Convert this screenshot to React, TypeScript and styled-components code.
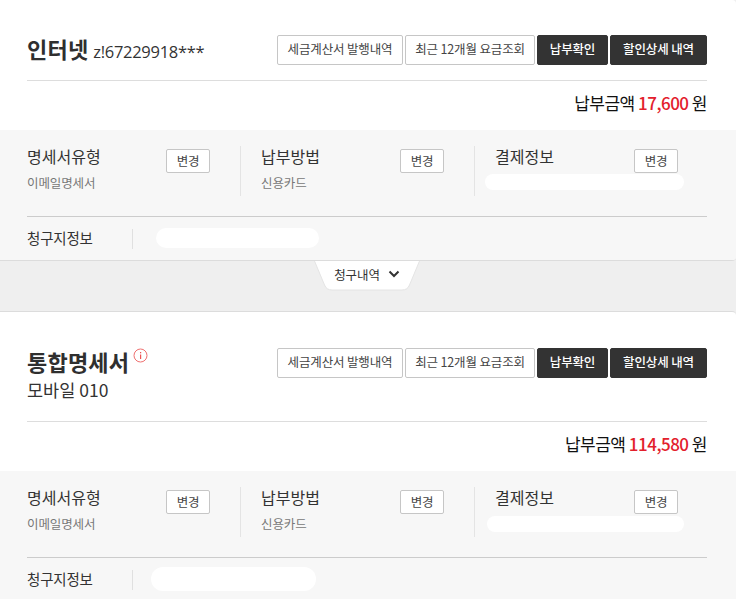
import * as React from 'react'
import styled, { createGlobalStyle } from 'styled-components'

const GlobalStyle = createGlobalStyle`
  html, body {
    margin: 0;
    padding: 0;
    background: #efefef;
    overflow: hidden;
  }
  body {
    font-family: "Noto Sans CJK KR", "Noto Sans", sans-serif;
    color: #333;
  }
`

const Page = styled.div`
  width: 736px;
  height: 599px;
  overflow: hidden;
  background: #efefef;
`

const Card = styled.section<{ $first?: boolean }>`
  background: #fff;
  border-top: ${p => (p.$first ? '0' : '1px solid #dcdcdc')};
  border-bottom: ${p => (p.$first ? '1px solid #dcdcdc' : '0')};
  border-top-right-radius: 4px;
  border-bottom-right-radius: ${p => (p.$first ? '4px' : '0')};
  overflow: hidden;
`

const Header = styled.div<{ $height: number; $top: number }>`
  height: ${p => p.$height}px;
  margin: 0 29px 0 27px;
  padding-top: ${p => p.$top}px;
  box-sizing: border-box;
  border-bottom: 1px solid #ddd;
  display: flex;
  justify-content: space-between;
  align-items: flex-start;
`

const TitleRow = styled.div`
  display: flex;
  align-items: baseline;
  gap: 5px;
  line-height: 26px;
`

const TitleStack = styled.div`
  display: flex;
  flex-direction: column;
`

const TitleLine = styled.div`
  display: flex;
  align-items: flex-start;
  gap: 4px;
  height: 30px;
  line-height: 26px;
`

const Title = styled.h2`
  margin: 0;
  font-size: 22px;
  line-height: inherit;
  font-weight: 700;
  letter-spacing: 0.2px;
  color: #2f2f2f;
`

const Account = styled.span`
  font-family: "Open Sans", "Noto Sans CJK KR", sans-serif;
  font-size: 16.5px;
  letter-spacing: -0.3px;
  color: #333;
`

const Phone = styled.span`
  font-size: 17.5px;
  line-height: 24px;
  color: #333;
`

const InfoIcon = styled.svg`
  width: 15px;
  height: 15px;
`

const Buttons = styled.div`
  display: flex;
  gap: 2px;
`

const ActionButton = styled.button<{ $dark?: boolean; $width: number }>`
  width: ${p => p.$width}px;
  height: 30px;
  padding: 0 0 3px;
  border-radius: 2px;
  border: 1px solid ${p => (p.$dark ? '#333' : '#c6c6c6')};
  background: ${p => (p.$dark ? '#333' : '#fff')};
  color: ${p => (p.$dark ? '#fff' : '#444')};
  font-family: inherit;
  font-size: 12.5px;
  font-weight: ${p => (p.$dark ? 500 : 400)};
  letter-spacing: -0.15px;
  white-space: nowrap;
`

const Amount = styled.div`
  height: 49px;
  margin-right: 29px;
  padding-top: 10px;
  box-sizing: border-box;
  text-align: right;
  font-size: 17px;
  line-height: 24px;
  letter-spacing: -0.5px;
  color: #111;
`

const Price = styled.strong`
  font-weight: 500;
  color: #e3202c;
`

const Detail = styled.div`
  background: #f7f7f7;
  padding: 16px 29px 0 27px;
`

const Columns = styled.div`
  display: flex;
  height: 50px;
  padding-bottom: 20px;
  border-bottom: 1px solid #ccc;
`

const Column = styled.div<{ $first?: boolean; $last?: boolean }>`
  width: ${p => (p.$first ? 214 : p.$last ? 212 : 234)}px;
  padding-left: ${p => (p.$first ? 0 : 20)}px;
  border-right: ${p => (p.$last ? 0 : '1px solid #e4e4e4')};
  box-sizing: border-box;
  display: flex;
  align-items: flex-start;
  flex-shrink: 0;
`

const ColumnText = styled.div`
  width: 139px;
  flex-shrink: 0;
`

const Label = styled.div`
  font-size: 16px;
  line-height: 20px;
  letter-spacing: 0;
  color: #333;
`

const SubText = styled.div`
  margin-top: 8px;
  font-size: 12.5px;
  line-height: 18px;
  letter-spacing: -0.1px;
  color: #777;
`

const ChangeButton = styled.button`
  width: 44px;
  height: 24px;
  margin-top: 3px;
  padding: 0 0 2px;
  border: 1px solid #c6c6c6;
  border-radius: 2px;
  background: #fff;
  color: #444;
  font-family: inherit;
  font-size: 12.5px;
  letter-spacing: -0.2px;
`

const Masked = styled.span<{ $w: number; $h: number; $x: number; $y: number }>`
  display: block;
  width: ${p => p.$w}px;
  height: ${p => p.$h}px;
  margin-left: ${p => p.$x}px;
  margin-top: ${p => p.$y}px;
  border-radius: ${p => p.$h / 2}px;
  background: #fff;
`

const BillingRow = styled.div`
  height: 43px;
  padding-top: 12px;
  box-sizing: border-box;
  display: flex;
  align-items: flex-start;
`

const BillingLabel = styled.div`
  width: 105px;
  height: 20px;
  border-right: 1px solid #e0e0e0;
  flex-shrink: 0;
  font-size: 14.5px;
  line-height: 17px;
  letter-spacing: -0.2px;
  color: #333;
`

const Strip = styled.div`
  height: 50px;
  display: flex;
  justify-content: center;
  background: #efefef;
`

const Tab = styled.button`
  position: relative;
  width: 106px;
  height: 30px;
  margin-left: -2px;
  padding: 0 0 4px;
  border: 0;
  background: none;
  display: flex;
  align-items: center;
  justify-content: center;
  gap: 8px;
  font-family: inherit;
  font-size: 12.5px;
  letter-spacing: -0.1px;
  color: #333;
`

const TabShape = styled.svg`
  position: absolute;
  inset: 0;
  width: 100%;
  height: 100%;
`

const TabText = styled.span`
  position: relative;
`

const TabChevron = styled.svg`
  position: relative;
  width: 12px;
  height: 8px;
`

const buttons = [
  { text: '세금계산서 발행내역', width: 126 },
  { text: '최근 12개월 요금조회', width: 130 },
  { text: '납부확인', width: 71, dark: true },
  { text: '할인상세 내역', width: 97, dark: true },
]

const ButtonGroup = () => (
  <Buttons>
    {buttons.map(b => (
      <ActionButton key={b.text} $width={b.width} $dark={b.dark}>
        {b.text}
      </ActionButton>
    ))}
  </Buttons>
)

type Mask = { w: number; h: number; x: number; y: number }

const DetailPanel = ({ payMask, addrMask }: { payMask: Mask; addrMask: Mask }) => (
  <Detail>
    <Columns>
      <Column $first>
        <ColumnText>
          <Label>명세서유형</Label>
          <SubText>이메일명세서</SubText>
        </ColumnText>
        <ChangeButton>변경</ChangeButton>
      </Column>
      <Column>
        <ColumnText>
          <Label>납부방법</Label>
          <SubText>신용카드</SubText>
        </ColumnText>
        <ChangeButton>변경</ChangeButton>
      </Column>
      <Column $last>
        <ColumnText>
          <Label>결제정보</Label>
          <Masked $w={payMask.w} $h={payMask.h} $x={payMask.x} $y={payMask.y} />
        </ColumnText>
        <ChangeButton>변경</ChangeButton>
      </Column>
    </Columns>
    <BillingRow>
      <BillingLabel>청구지정보</BillingLabel>
      <Masked $w={addrMask.w} $h={addrMask.h} $x={addrMask.x} $y={addrMask.y} />
    </BillingRow>
  </Detail>
)

export default function App() {
  return (
    <Page>
      <GlobalStyle />
      <Card $first>
        <Header $height={81} $top={35}>
          <TitleRow>
            <Title>인터넷</Title>
            <Account>z!67229918***</Account>
          </TitleRow>
          <ButtonGroup />
        </Header>
        <Amount>
          납부금액 <Price>17,600</Price> 원
        </Amount>
        <DetailPanel
          payMask={{ w: 199, h: 16, x: -10, y: 8 }}
          addrMask={{ w: 163, h: 20, x: 23, y: -1 }}
        />
      </Card>
      <Strip>
        <Tab>
          <TabShape viewBox="0 0 106 30" aria-hidden="true">
            <path
              d="M0.5 0 L10.5 24 Q12.5 29 18 29 L88 29 Q93.5 29 95.5 24 L105.5 0"
              fill="#fff"
              stroke="#e4e4e4"
            />
          </TabShape>
          <TabText>청구내역</TabText>
          <TabChevron viewBox="0 0 12 8" aria-hidden="true">
            <path d="M1.5 1.5 L6 6 L10.5 1.5" fill="none" stroke="#333" strokeWidth="2" />
          </TabChevron>
        </Tab>
      </Strip>
      <Card>
        <Header $height={110} $top={36}>
          <TitleStack>
            <TitleLine>
              <Title>통합명세서</Title>
              <InfoIcon viewBox="0 0 15 15" aria-hidden="true">
                <circle cx="7.5" cy="7.5" r="6.5" fill="none" stroke="#ee7070" strokeWidth="1" />
                <rect x="7" y="6.5" width="1.2" height="4.5" fill="#e55" />
                <rect x="7" y="4" width="1.2" height="1.3" fill="#e55" />
              </InfoIcon>
            </TitleLine>
            <Phone>모바일 010</Phone>
          </TitleStack>
          <ButtonGroup />
        </Header>
        <Amount>
          납부금액 <Price>114,580</Price> 원
        </Amount>
        <DetailPanel
          payMask={{ w: 197, h: 16, x: -8, y: 9 }}
          addrMask={{ w: 165, h: 24, x: 18, y: -3 }}
        />
      </Card>
    </Page>
  )
}
